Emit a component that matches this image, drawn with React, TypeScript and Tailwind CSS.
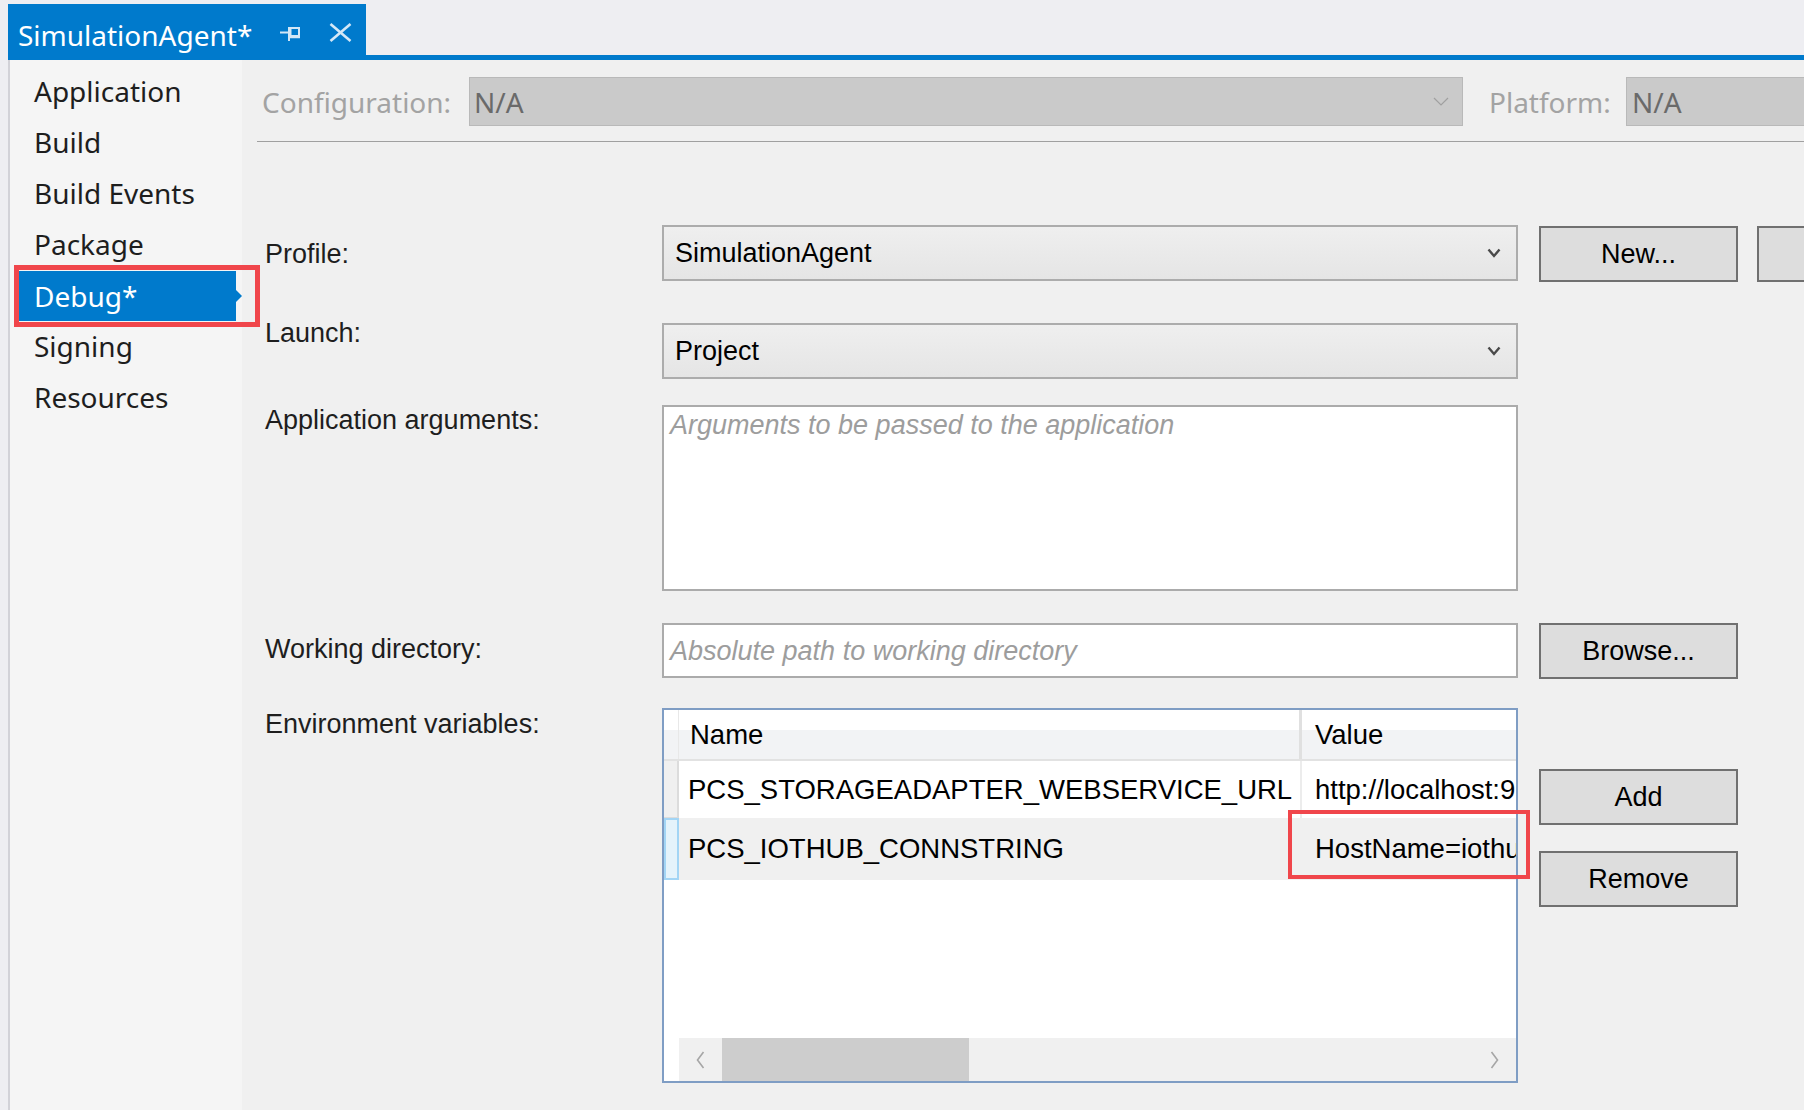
import React from 'react'

const sidebarItems = ['Application', 'Build', 'Build Events', 'Package', 'Debug*', 'Signing', 'Resources']

function PinIcon({ className = '' }: { className?: string }) {
  return (
    <svg width="20" height="14" viewBox="0 0 20 14" className={className}>
      <line x1="0" y1="5.5" x2="8" y2="5.5" stroke="#d3e7f6" strokeWidth="2" />
      <line x1="9" y1="0" x2="9" y2="14" stroke="#d3e7f6" strokeWidth="2" />
      <rect x="10.5" y="1" width="8.5" height="8" fill="none" stroke="#d3e7f6" strokeWidth="2" />
      <line x1="10" y1="10" x2="20" y2="10" stroke="#d3e7f6" strokeWidth="2.5" />
    </svg>
  )
}

function CloseIcon({ className = '' }: { className?: string }) {
  return (
    <svg width="23" height="19" viewBox="0 0 23 19" className={className}>
      <line x1="1.5" y1="1" x2="21.5" y2="18" stroke="#d4e8f7" strokeWidth="2.6" />
      <line x1="21.5" y1="1" x2="1.5" y2="18" stroke="#d4e8f7" strokeWidth="2.6" />
    </svg>
  )
}

function Chevron() {
  return (
    <svg width="14" height="10" viewBox="0 0 14 10" className="shrink-0">
      <polyline points="1.5,1.5 7,8 12.5,1.5" fill="none" stroke="#4a4a4a" strokeWidth="2.4" />
    </svg>
  )
}

function Arrow({ dir }: { dir: 'left' | 'right' }) {
  return (
    <svg width="9" height="18" viewBox="0 0 9 18">
      <polyline
        points={dir === 'left' ? '7.5,1 1.5,9 7.5,17' : '1.5,1 7.5,9 1.5,17'}
        fill="none"
        stroke="#a6a6a6"
        strokeWidth="1.6"
      />
    </svg>
  )
}

function Button({ label, className = '' }: { label: string; className?: string }) {
  return (
    <div
      className={`flex items-center justify-center w-[199px] h-[56px] shrink-0 bg-[#dddddd] border-2 border-[#707070] text-black ${className}`}
    >
      {label}
    </div>
  )
}

function Select({ value }: { value: string }) {
  return (
    <div className="w-[856px] h-[56px] shrink-0 flex items-center justify-between border-2 border-[#acacac] bg-[linear-gradient(to_bottom,#efefef,#e5e5e5)] pl-[11px] pr-[15px] text-black">
      <span>{value}</span>
      <Chevron />
    </div>
  )
}

function Sidebar() {
  return (
    <div className="w-[232px] shrink-0 bg-[#f5f5f5] pt-[6px] font-['Noto_Sans',sans-serif] text-[28px] text-[#1e1e1e]">
      {sidebarItems.map((item) =>
        item === 'Debug*' ? (
          <div key={item} className="relative flex items-center h-[51px] ml-[9px]">
            <div className="flex-1 h-[50px] bg-[#007acc] text-white pl-[15px] leading-[50px]">{item}</div>
            <div className="w-0 h-0 border-y-[6px] border-y-transparent border-l-[6px] border-l-[#007acc]" />
            <div className="absolute left-[-5px] top-[-5px] w-[246px] h-[62px] border-[5px] border-[#f0464b] z-10" />
          </div>
        ) : (
          <div key={item} className="h-[51px] pl-[24px] leading-[51px]">
            {item}
          </div>
        ),
      )}
    </div>
  )
}

function EnvTable() {
  return (
    <div className="relative w-[856px] h-[375px] shrink-0">
      <div className="w-full h-full border-2 border-[#7f9dc4] bg-white flex flex-col overflow-hidden text-black text-[27.5px]">
        <div className="flex h-[51px] shrink-0 border-b-2 border-[#e2e2e2] bg-[linear-gradient(to_bottom,#ffffff_0%,#ffffff_40%,#f2f3f5_40%,#f2f3f5_100%)]">
          <div className="w-[15px] shrink-0 border-r border-[#e8e8e8]" />
          <div className="w-[623px] shrink-0 pl-[11px] flex items-center border-r-[3px] border-[#e0e0e0]">Name</div>
          <div className="flex-1 min-w-0 pl-[13px] flex items-center">Value</div>
        </div>
        <div className="flex h-[57px] shrink-0">
          <div className="w-[15px] shrink-0 bg-[#f0f0f0] border-r-2 border-b border-[#dcdcdc]" />
          <div className="w-[623px] shrink-0 pl-[9px] flex items-center border-r-2 border-[#ececec] whitespace-nowrap">
            PCS_STORAGEADAPTER_WEBSERVICE_URL
          </div>
          <div className="flex-1 min-w-0 pl-[13px] flex items-center overflow-hidden whitespace-nowrap">
            http://localhost:9
          </div>
        </div>
        <div className="flex h-[62px] shrink-0 bg-[#f0f0f0]">
          <div className="w-[15px] shrink-0 bg-[#e5f3fb] border-2 border-[#a3d5f5]" />
          <div className="w-[623px] shrink-0 pl-[9px] flex items-center whitespace-nowrap">PCS_IOTHUB_CONNSTRING</div>
          <div className="flex-1 min-w-0 pl-[13px] flex items-center overflow-hidden whitespace-nowrap">
            HostName=iothu
          </div>
        </div>
        <div className="flex-1" />
        <div className="flex h-[43px] shrink-0">
          <div className="w-[15px] shrink-0 bg-white" />
          <div className="flex-1 flex bg-[#f0f0f0]">
            <div className="w-[43px] flex items-center justify-center">
              <Arrow dir="left" />
            </div>
            <div className="w-[247px] bg-[#cdcdcd]" />
            <div className="flex-1" />
            <div className="w-[43px] flex items-center justify-center">
              <Arrow dir="right" />
            </div>
          </div>
        </div>
      </div>
      <div className="absolute left-[626px] top-[102px] w-[242px] h-[69px] border-[4px] border-[#f0464b]" />
    </div>
  )
}

function Content() {
  return (
    <div className="flex-1 min-w-0 overflow-hidden bg-[#f0f0f0] pl-[15px]">
      <div className="flex items-center h-[49px] mt-[17px] pl-[5px] font-['Noto_Sans',sans-serif] text-[28px] text-[#a3a3a3]">
        <span className="w-[207px] shrink-0 leading-[49px] pt-[1px]">Configuration:</span>
        <div className="w-[994px] shrink-0 h-[49px] bg-[#cacaca] border border-[#b9b9b9] flex items-center justify-between pl-[4px] pr-[13px] text-[#6a6a6a]">
          <span>N/A</span>
          <svg width="16" height="9" viewBox="0 0 16 9">
            <polyline points="1,1 8,8 15,1" fill="none" stroke="#a0a0a0" strokeWidth="1.2" />
          </svg>
        </div>
        <span className="ml-[26px] w-[137px] shrink-0">Platform:</span>
        <div className="w-[300px] shrink-0 h-[49px] bg-[#cacaca] border border-[#b9b9b9] pl-[5px] flex items-center text-[#6a6a6a]">
          N/A
        </div>
      </div>
      <div className="h-px mt-[15px] bg-[#a0a0a0]" />

      <div className="pl-[8px] text-[27px] leading-[30px] text-[#1e1e1e]">
        <div className="flex items-start mt-[83px]">
          <div className="w-[397px] shrink-0 pt-[14px]">Profile:</div>
          <Select value="SimulationAgent" />
          <Button label="New..." className="ml-[21px] mt-[1px]" />
          <Button label="" className="ml-[19px] mt-[1px]" />
        </div>

        <div className="flex items-start mt-[41px]">
          <div className="w-[397px] shrink-0 mt-[-5px]">Launch:</div>
          <Select value="Project" />
        </div>

        <div className="flex items-start mt-[26px]">
          <div className="w-[397px] shrink-0">Application arguments:</div>
          <div className="w-[856px] h-[186px] shrink-0 border-2 border-[#ababab] bg-white pl-[6px] pt-[3px] italic text-[#9d9d9d]">
            Arguments to be passed to the application
          </div>
        </div>

        <div className="flex items-start mt-[32px]">
          <div className="w-[397px] shrink-0 pt-[11px]">Working directory:</div>
          <div className="w-[856px] h-[55px] shrink-0 border-2 border-[#ababab] bg-white pl-[6px] flex items-center italic text-[#9d9d9d]">
            Absolute path to working directory
          </div>
          <Button label="Browse..." className="ml-[21px]" />
        </div>

        <div className="flex items-start mt-[29px]">
          <div className="w-[397px] shrink-0 pt-[1px]">Environment variables:</div>
          <EnvTable />
          <div className="ml-[21px] flex flex-col shrink-0">
            <Button label="Add" className="mt-[61px]" />
            <Button label="Remove" className="mt-[26px]" />
          </div>
        </div>
      </div>
    </div>
  )
}

export default function App() {
  return (
    <div className="w-[1804px] h-[1110px] overflow-hidden bg-[#eeeef2] flex flex-col font-['Liberation_Sans',Arial,sans-serif]">
      <div className="h-[55px] shrink-0 flex items-end pl-[8px]">
        <div className="h-[51px] w-[358px] bg-[#007acc] flex items-start pt-[11px] pl-[10px] font-['Noto_Sans',sans-serif] text-[28px] leading-[40px] text-white">
          <span>SimulationAgent*</span>
          <PinIcon className="ml-[28px] mt-[12px] shrink-0" />
          <CloseIcon className="ml-[29px] mt-[8px] shrink-0" />
        </div>
      </div>
      <div className="h-[5px] shrink-0 ml-[8px] bg-[#007acc]" />
      <div className="flex-1 min-h-0 flex ml-[8px]">
        <div className="w-[2px] shrink-0 bg-[#d2d2d8]" />
        <Sidebar />
        <Content />
      </div>
    </div>
  )
}
